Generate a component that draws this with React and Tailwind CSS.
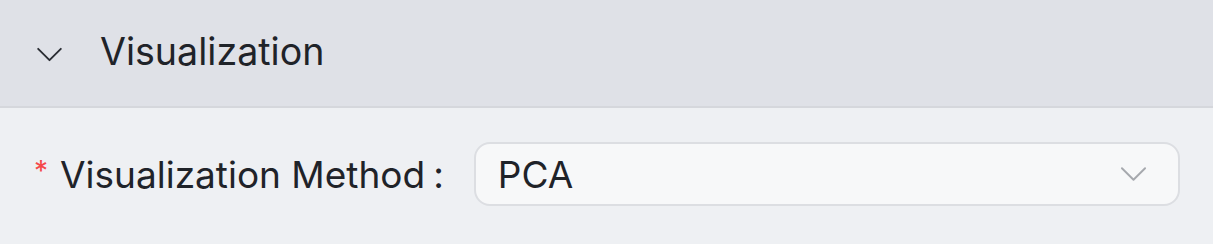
const Chevron = ({ className }) => (
  <svg viewBox="0 0 28 18" fill="none" stroke="currentColor" strokeWidth="2" strokeLinecap="round" strokeLinejoin="round" className={className}>
    <polyline points="2,3 14,15 26,3" />
  </svg>
);

const App = () => {
  return (
    <div className="w-[1213px] h-[244px] bg-[#eef0f3] text-[#1f2329]" style={{ fontFamily: 'Inter, "Noto Sans", sans-serif' }}>
      {/* Collapse header */}
      <div className="h-[108px] flex items-center bg-[#dfe1e7] border-b-2 border-[#d5d7dc] pl-[36px]">
        <Chevron className="w-[27px] h-[17px] text-[#2a2d33] mt-[2px]" />
        <span className="ml-[37px] text-[37.6px] leading-none pb-[2px]">Visualization</span>
      </div>

      {/* Form row */}
      <div className="flex items-center pl-[34px] pt-[34px]">
        <label className="flex items-center text-[37px] leading-none">
          <span className="text-[#f5484a] text-[28px] mr-[12px] -mt-[6px]">*</span>
          <span>Visualization Method</span>
          <span className="ml-[8px] mr-[30px]">:</span>
        </label>
        <div className="w-[706px] h-[64px] flex items-center justify-between rounded-[16px] border-2 border-[#dcdee2] bg-[#f7f8f9] pl-[22px] pr-[31px]">
          <span className="text-[37px] leading-none">PCA</span>
          <Chevron className="w-[27px] h-[18px] text-[#a6a9ae]" />
        </div>
      </div>
    </div>
  );
};

export default App;
